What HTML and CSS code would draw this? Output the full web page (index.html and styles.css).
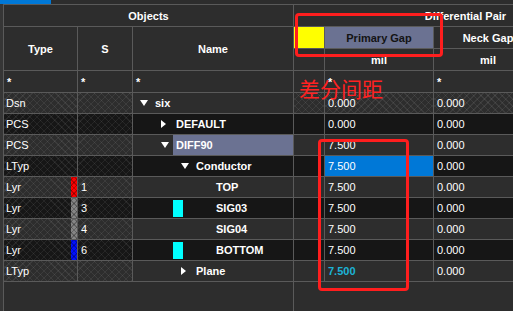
FILE: index.html
```html
<!DOCTYPE html>
<html lang="en">

<head>
    <meta charset="UTF-8">
    <meta name="viewport" content="width=device-width, initial-scale=1.0">
    <title>Differential Pair</title>
    <link rel="stylesheet" href="styles.css">
</head>

<body>
    <div class="tabbar">
        <div class="tab"></div>
    </div>

    <div class="sheet">
        <!-- header rows -->
        <div class="cell hd" style="grid-column: span 3">Objects</div>
        <div class="cell hd" style="grid-column: span 4">Differential Pair</div>

        <div class="cell hd tall">Type</div>
        <div class="cell hd tall">S</div>
        <div class="cell hd tall">Name</div>
        <div class="cell yellow"></div>
        <div class="cell hd slate">Primary Gap</div>
        <div class="cell hd">Neck Gap</div>
        <div class="cell hd"></div>

        <div class="cell"></div>
        <div class="cell hd">mil</div>
        <div class="cell hd">mil</div>
        <div class="cell"></div>

        <!-- filter row -->
        <div class="cell star">*</div>
        <div class="cell star">*</div>
        <div class="cell star">*</div>
        <div class="cell"></div>
        <div class="cell star">*</div>
        <div class="cell star">*</div>
        <div class="cell"></div>

        <!-- Dsn -->
        <div class="cell g hatch type">Dsn</div>
        <div class="cell g hatch"></div>
        <div class="cell g name l0"><span class="arr down"></span>six</div>
        <div class="cell g hatch"></div>
        <div class="cell g hatch val">0.000</div>
        <div class="cell g hatch val">0.000</div>
        <div class="cell g hatch"></div>

        <!-- DEFAULT -->
        <div class="cell k hatch type">PCS</div>
        <div class="cell k hatch"></div>
        <div class="cell k name l1"><span class="arr right"></span>DEFAULT</div>
        <div class="cell k"></div>
        <div class="cell k val">0.000</div>
        <div class="cell k val">0.000</div>
        <div class="cell k"></div>

        <!-- DIFF90 -->
        <div class="cell g hatch type">PCS</div>
        <div class="cell g hatch"></div>
        <div class="cell g name l1"><span class="arr down"></span><span class="sel">DIFF90</span></div>
        <div class="cell g"></div>
        <div class="cell g val">7.500</div>
        <div class="cell g val">0.000</div>
        <div class="cell g"></div>

        <!-- Conductor -->
        <div class="cell k hatch type">LTyp</div>
        <div class="cell k hatch"></div>
        <div class="cell k name l2"><span class="arr down"></span>Conductor</div>
        <div class="cell k"></div>
        <div class="cell val active">7.500</div>
        <div class="cell k val">0.000</div>
        <div class="cell k"></div>

        <!-- TOP -->
        <div class="cell g hatch type">Lyr<span class="layer red"></span></div>
        <div class="cell g hatch num">1</div>
        <div class="cell g name leaf"><span class="sw"></span>TOP</div>
        <div class="cell g"></div>
        <div class="cell g val">7.500</div>
        <div class="cell g val">0.000</div>
        <div class="cell g"></div>

        <!-- SIG03 -->
        <div class="cell k hatch type">Lyr<span class="layer gray"></span></div>
        <div class="cell k hatch num">3</div>
        <div class="cell k name leaf"><span class="sw cyan"></span>SIG03</div>
        <div class="cell k"></div>
        <div class="cell k val">7.500</div>
        <div class="cell k val">0.000</div>
        <div class="cell k"></div>

        <!-- SIG04 -->
        <div class="cell g hatch type">Lyr<span class="layer gray"></span></div>
        <div class="cell g hatch num">4</div>
        <div class="cell g name leaf"><span class="sw"></span>SIG04</div>
        <div class="cell g"></div>
        <div class="cell g val">7.500</div>
        <div class="cell g val">0.000</div>
        <div class="cell g"></div>

        <!-- BOTTOM -->
        <div class="cell k hatch type">Lyr<span class="layer blue"></span></div>
        <div class="cell k hatch num">6</div>
        <div class="cell k name leaf"><span class="sw cyan"></span>BOTTOM</div>
        <div class="cell k"></div>
        <div class="cell k val">7.500</div>
        <div class="cell k val">0.000</div>
        <div class="cell k"></div>

        <!-- Plane -->
        <div class="cell g hatch type">LTyp</div>
        <div class="cell g hatch"></div>
        <div class="cell g name l2"><span class="arr right"></span>Plane</div>
        <div class="cell g"></div>
        <div class="cell g val inherit">7.500</div>
        <div class="cell g val">0.000</div>
        <div class="cell g"></div>

        <!-- empty space under the rows -->
        <div class="cell" style="grid-column: span 3"></div>
        <div class="cell" style="grid-column: span 4"></div>
    </div>

    <!-- red markup drawn over the screenshot -->
    <div class="mark box-head"></div>
    <div class="mark box-vals"></div>
    <div class="mark-text">差分间距</div>
</body>

</html>
```

FILE: styles.css
```css
* {
    margin: 0;
    padding: 0;
    box-sizing: border-box;
}

body {
    width: 513px;
    height: 311px;
    overflow: hidden;
    background-color: #363636;
    font-family: "Liberation Sans", Arial, sans-serif;
    font-size: 11px;
    color: white;
    position: relative;
}

.tabbar {
    height: 4px;
    background-color: #2d2d2d;
}

.tab {
    width: 51px;
    height: 4px;
    background-color: #0078d7;
}

.sheet {
    display: grid;
    grid-template-columns: 73px 54px 160px 30px 108px 108px 94px;
    grid-template-rows: 21px 21px 21px 21px repeat(9, 20px) 1fr;
    gap: 1px;
    padding: 1px 0 0 1px;
    margin-left: 3px;
    width: max-content;
    height: 307px;
    background-color: #5a5a5a;
}

.cell {
    background-color: #2d2d2d;
    display: flex;
    align-items: center;
    padding-left: 3px;
    white-space: nowrap;
    overflow: hidden;
}

.hd {
    justify-content: center;
    font-weight: bold;
    padding-left: 0;
}

.tall {
    grid-row: span 2;
}

.yellow {
    background-color: #ffff00;
}

.slate {
    background-color: #6b7292;
    color: #141414;
}

.star {
    font-weight: bold;
}

.g {
    background-color: #2d2d2d;
}

.k {
    background-color: #161616;
}

.hatch {
    background-image:
        repeating-linear-gradient(45deg, rgba(255, 255, 255, 0.07) 0 1px, transparent 1px 5px),
        repeating-linear-gradient(-45deg, rgba(255, 255, 255, 0.07) 0 1px, transparent 1px 5px);
}

.type {
    justify-content: space-between;
    padding-left: 2px;
}

.layer {
    width: 6px;
    align-self: stretch;
    background-image:
        repeating-linear-gradient(45deg, rgba(0, 0, 0, 0.25) 0 1px, transparent 1px 4px),
        repeating-linear-gradient(-45deg, rgba(0, 0, 0, 0.25) 0 1px, transparent 1px 4px);
}

.red {
    background-color: #ff0000;
}

.gray {
    background-color: #858585;
}

.blue {
    background-color: #0010ff;
}

.num {
    padding-left: 3px;
}

.name {
    font-weight: bold;
}

.l0 {
    padding-left: 7px;
}

.l1 {
    padding-left: 28px;
}

.l2 {
    padding-left: 48px;
}

.leaf {
    padding-left: 40px;
}

.arr {
    width: 15px;
    flex: none;
    display: flex;
    align-items: center;
}

.arr.down::before {
    content: "";
    border-left: 4px solid transparent;
    border-right: 4px solid transparent;
    border-top: 6px solid white;
}

.arr.right::before {
    content: "";
    border-top: 4px solid transparent;
    border-bottom: 4px solid transparent;
    border-left: 5px solid white;
}

.sel {
    flex: 1;
    align-self: stretch;
    display: flex;
    align-items: center;
    margin-left: -3px;
    padding-left: 3px;
    background-color: #6b7292;
}

.sw {
    width: 10px;
    height: 17px;
    margin-right: 33px;
    flex: none;
}

.cyan {
    background-color: #00ffff;
}

.val {
    padding-left: 3px;
}

.active {
    background-color: #0078d7;
}

.inherit {
    color: #1cb3d6;
    font-weight: bold;
}

.mark {
    position: absolute;
    border: 3px solid #ff1e1e;
    border-radius: 4px;
}

.box-head {
    left: 295px;
    top: 13px;
    width: 148px;
    height: 44px;
}

.box-vals {
    left: 318px;
    top: 139px;
    width: 91px;
    height: 152px;
}

.mark-text {
    position: absolute;
    left: 299px;
    top: 76px;
    font-family: "Noto Sans CJK SC", sans-serif;
    font-size: 21px;
    line-height: 24px;
    color: #ff2222;
}
```
